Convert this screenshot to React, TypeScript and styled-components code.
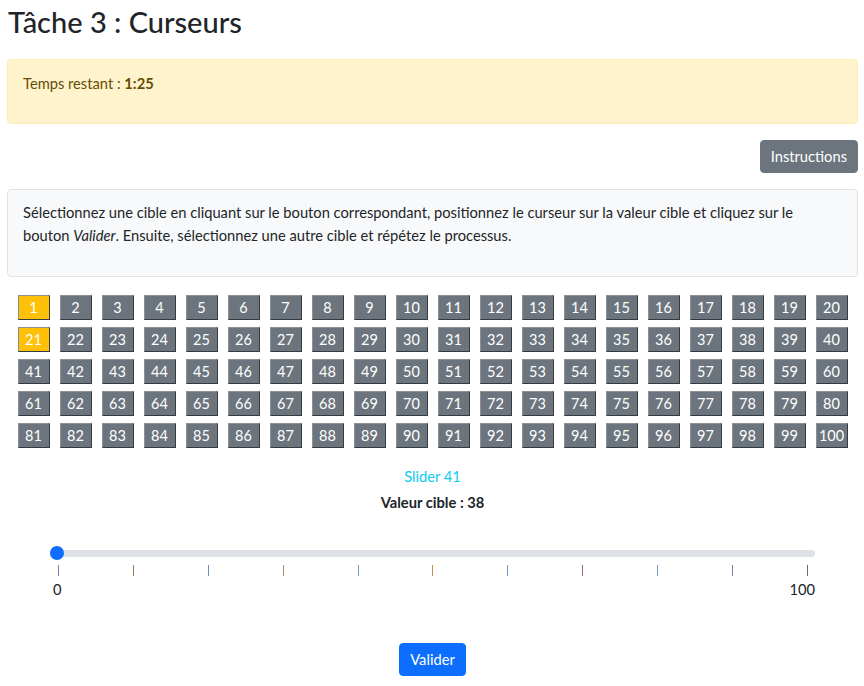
import React, { useState } from "react"
import styled, { createGlobalStyle } from "styled-components"

const GlobalStyle = createGlobalStyle`
  body {
    margin: 0;
    font-family: Lato, "Noto Sans", sans-serif;
    font-size: 14.7px;
    color: #212529;
    background: #fff;
  }
`

const Page = styled.div`
  padding: 0 6px 8px 7px;
`

const Title = styled.h2`
  margin: 0;
  padding: 5px 0 0 1px;
  font-size: 29px;
  font-weight: 500;
  line-height: 34px;
  height: 54px;
`

const Alert = styled.div`
  background: #fff3cd;
  border: 1px solid #ffecb5;
  border-radius: 4px;
  color: #664d03;
  padding: 13px 15px 29px;
  line-height: 21px;
`

const Toolbar = styled.div`
  display: flex;
  justify-content: flex-end;
  margin-top: 16px;
`

const Button = styled.button<{ $variant: "secondary" | "primary" }>`
  font-family: inherit;
  font-size: 14.7px;
  line-height: 21px;
  padding: 5px 10px;
  border: 1px solid ${(p) => (p.$variant === "primary" ? "#0d6efd" : "#6c757d")};
  border-radius: 4px;
  background: ${(p) => (p.$variant === "primary" ? "#0d6efd" : "#6c757d")};
  color: #fff;
  cursor: pointer;
`

const InfoBox = styled.div`
  margin-top: 16px;
  background: #f8f9fa;
  border: 1px solid #dee2e6;
  border-radius: 4px;
  padding: 11px 15px 13px;
  line-height: 23px;

  p {
    margin: 0 0 16px;
  }
`

const Grid = styled.div`
  display: grid;
  grid-template-columns: repeat(20, 32px);
  column-gap: 10px;
  row-gap: 7px;
  justify-content: center;
  margin-top: 18px;
`

const Target = styled.button<{ $active: boolean }>`
  width: 32px;
  height: 25px;
  padding: 0;
  font-family: inherit;
  font-size: 14.5px;
  color: #fff;
  background: ${(p) => (p.$active ? "#ffc107" : "#6c757d")};
  border: 1px solid;
  border-color: #8a9096 #343a40 #343a40 #8a9096;
  cursor: pointer;
`

const SliderName = styled.div`
  margin-top: 18px;
  text-align: center;
  color: #0dcaf0;
  line-height: 21px;
`

const TargetValue = styled.div`
  margin-top: 5px;
  text-align: center;
  font-weight: 700;
  line-height: 21px;
`

const SliderBlock = styled.div`
  margin: 33px 43px 0;
`

const Range = styled.input`
  display: block;
  width: 100%;
  margin: 0;
  height: 14px;
  background: transparent;
  -webkit-appearance: none;
  appearance: none;

  &::-webkit-slider-runnable-track {
    height: 7px;
    background: #dee2e6;
    border-radius: 4px;
  }
  &::-webkit-slider-thumb {
    -webkit-appearance: none;
    width: 14px;
    height: 14px;
    margin-top: -3.5px;
    border-radius: 50%;
    background: #0d6efd;
    border: 0;
  }
`

const Ticks = styled.div`
  display: flex;
  justify-content: space-between;
  padding: 0 7px 0 8px;
  margin-top: 5px;
`

const Tick = styled.span<{ $color: string }>`
  width: 1px;
  height: 11px;
  background: ${(p) => p.$color};
`

const Labels = styled.div`
  display: flex;
  justify-content: space-between;
  padding-left: 3px;
  margin-top: 4px;
  line-height: 18px;
`

const Footer = styled.div`
  display: flex;
  justify-content: center;
  margin-top: 45px;
`

const tickColors = [
  "#7a7fb8",
  "#94785a",
  "#6f8fc8",
  "#b08a5e",
  "#6f98c8",
  "#c48a50",
  "#6f98c8",
  "#a06a5e",
  "#6f98c8",
  "#7a7fb8",
  "#6c6c6c",
]

const App: React.FC = () => {
  const [value, setValue] = useState(0)
  const active = [1, 21]

  return (
    <Page>
      <GlobalStyle />
      <Title>Tâche 3 : Curseurs</Title>
      <Alert>
        Temps restant : <strong>1:25</strong>
      </Alert>
      <Toolbar>
        <Button $variant="secondary">Instructions</Button>
      </Toolbar>
      <InfoBox>
        <p>
          Sélectionnez une cible en cliquant sur le bouton correspondant,
          positionnez le curseur sur la valeur cible et cliquez sur le bouton{" "}
          <em>Valider</em>. Ensuite, sélectionnez une autre cible et répétez le
          processus.
        </p>
      </InfoBox>
      <Grid>
        {Array.from({ length: 100 }, (_, i) => i + 1).map((n) => (
          <Target key={n} $active={active.includes(n)}>
            {n}
          </Target>
        ))}
      </Grid>
      <SliderName>Slider 41</SliderName>
      <TargetValue>Valeur cible : 38</TargetValue>
      <SliderBlock>
        <Range
          type="range"
          min={0}
          max={100}
          value={value}
          onChange={(e) => setValue(Number(e.target.value))}
        />
        <Ticks>
          {tickColors.map((c, i) => (
            <Tick key={i} $color={c} />
          ))}
        </Ticks>
        <Labels>
          <span>0</span>
          <span>100</span>
        </Labels>
      </SliderBlock>
      <Footer>
        <Button $variant="primary">Valider</Button>
      </Footer>
    </Page>
  )
}

export default App
